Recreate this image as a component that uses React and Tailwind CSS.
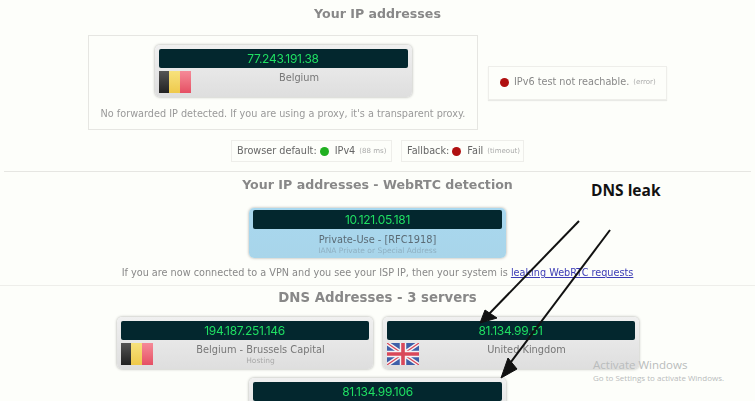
const dejavu = "font-['DejaVu_Sans',sans-serif]";

function BelgiumFlag() {
  return (
    <div className="flex h-[22px] w-[32px] shrink-0">
      <div className="flex-1 bg-gradient-to-b from-[#555] to-[#222]" />
      <div className="flex-1 bg-gradient-to-b from-[#f7e27c] to-[#efc94a]" />
      <div className="flex-1 bg-gradient-to-b from-[#f58a98] to-[#e54f64]" />
    </div>
  );
}

function UkFlag() {
  return (
    <svg width="32" height="22" viewBox="0 0 32 22" className="shrink-0">
      <rect width="32" height="22" fill="#3f5fa8" />
      <path d="M0 0 L32 22 M32 0 L0 22" stroke="#f4f4f6" strokeWidth="4" />
      <path d="M0 0 L32 22 M32 0 L0 22" stroke="#d9485a" strokeWidth="1.2" />
      <path d="M16 0 V22 M0 11 H32" stroke="#f4f4f6" strokeWidth="6.5" />
      <path d="M16 0 V22 M0 11 H32" stroke="#d9485a" strokeWidth="3.6" />
    </svg>
  );
}

function IpBar({ ip }) {
  return (
    <div className="flex h-[19px] items-center justify-center rounded-[2px] bg-[#03272e] font-['Inter',sans-serif] text-[12px] font-normal tracking-[-0.3px] text-[#1fdf62]">
      {ip}
    </div>
  );
}

function IpCard({ ip, flag, name, sub, blue, className = '' }) {
  return (
    <div
      className={`rounded-[5px] px-[4px] pb-[4px] shadow-[0_0_3px_rgba(0,0,0,0.35)] ${
        blue ? 'bg-gradient-to-b from-[#a9d8ef] to-[#a8d5ea] pt-[2px]' : 'bg-gradient-to-b from-[#f0f0f0] to-[#dedede] pt-[4px]'
      } ${className}`}
    >
      <IpBar ip={ip} />
      <div className="flex h-[25px] items-start pt-[3px]">
        {flag}
        <div className="flex-1 text-center leading-[11px]">
          <div className={`text-[9.8px] ${blue ? 'pt-[2px] text-[#5b6b75]' : 'pt-[1px] text-[#777]'}`}>{name}</div>
          {sub && <div className={`text-[7.5px] ${blue ? 'text-[#8fb0c2]' : 'text-[#aaa]'}`}>{sub}</div>}
        </div>
      </div>
    </div>
  );
}

function Dot({ color }) {
  return <span className={`inline-block h-[9px] w-[9px] rounded-full ${color}`} />;
}

function Pill({ label, dot, value, note, className = '' }) {
  return (
    <div className={`flex h-[22px] items-center border border-[#eeeeea] pl-[5px] text-[9.7px] text-[#666] ${className}`}>
      <span>{label}</span>
      <span className="mr-[6px] ml-[3px] flex items-center">
        <Dot color={dot} />
      </span>
      <span className="mr-[4px]">{value}</span>
      <span className="text-[7px] text-[#aaa]">{note}</span>
    </div>
  );
}

function Title({ children, className = '' }) {
  return <h2 className={`text-center leading-[16px] font-bold text-[#888] ${className}`}>{children}</h2>;
}

export default function App() {
  return (
    <div className={`relative h-[401px] w-[755px] overflow-hidden bg-[#fdfefa] ${dejavu}`}>
      <div className="blur-[0.5px]">
        <Title className="pt-[6px] text-[12.6px]">Your IP addresses</Title>

        <div className="mt-[13px] ml-[88px] flex items-center gap-[10px]">
          <div className="flex h-[95px] w-[390px] flex-col items-center border border-[#e6e6e2] pt-[9px]">
            <IpCard className="w-[257px]" ip="77.243.191.38" flag={<BelgiumFlag />} name="Belgium" />
            <p className="mt-[11px] text-[9.7px] leading-[12px] whitespace-nowrap text-[#999]">
              No forwarded IP detected. If you are using a proxy, it's a transparent proxy.
            </p>
          </div>
          <div className="flex h-[34px] w-[179px] items-center border border-[#eeeeea] pl-[11px] text-[9.7px] text-[#888] shadow-[0_1px_1px_rgba(0,0,0,0.08)]">
            <Dot color="bg-[#b01010]" />
            <span className="mr-[4px] ml-[5px]">IPv6 test not reachable.</span>
            <span className="text-[7px] text-[#aaa]">(error)</span>
          </div>
        </div>

        <div className="mt-[10px] ml-[231px] flex gap-[9px]">
          <Pill className="w-[161px]" label="Browser default:" dot="bg-[#20b020]" value="IPv4" note="(88 ms)" />
          <Pill className="w-[123px]" label="Fallback:" dot="bg-[#b01010]" value="Fail" note="(timeout)" />
        </div>

        <div className="mx-[4px] mt-[9px] h-px bg-[#e6e6e2]" />
        <Title className="pt-[5px] text-[12.6px]">Your IP addresses - WebRTC detection</Title>

        <div className="mt-[15px] flex justify-center">
          <IpCard
            blue
            className="w-[257px]"
            ip="10.121.05.181"
            name="Private-Use - [RFC1918]"
            sub="IANA Private or Special Address"
          />
        </div>

        <p className="mt-[9px] text-center text-[9.7px] leading-[12px] text-[#888]">
          If you are now connected to a VPN and you see your ISP IP, then your system is{' '}
          <a className="text-[#3b3bb5] underline">leaking WebRTC requests</a>
        </p>

        <div className="mt-[6px] h-px bg-[#eeeeea]" />
        <Title className="pt-[4px] text-[13.3px]">DNS Addresses - 3 servers</Title>

        <div className="mt-[11px] flex justify-center gap-[10px]">
          <IpCard className="w-[256px]" ip="194.187.251.146" flag={<BelgiumFlag />} name="Belgium - Brussels Capital" sub="Hosting" />
          <IpCard className="w-[256px]" ip="81.134.99.51" flag={<UkFlag />} name="United Kingdom" />
        </div>
        <div className="mt-[9px] flex justify-center">
          <IpCard className="w-[257px]" ip="81.134.99.106" />
        </div>
      </div>

      {/* annotation drawn over the screenshot */}
      <span className="absolute top-[181px] left-[591px] font-['Open_Sans',sans-serif] text-[15.5px] leading-[18px] font-bold text-[#111]">
        DNS leak
      </span>
      <svg width="755" height="401" className="pointer-events-none absolute top-0 left-0">
        <path d="M579 221 L488 315" stroke="#111" strokeWidth="2" />
        <path d="M480 323 L485 310 L497 318 Z" fill="#111" stroke="#111" />
        <path d="M610 230 L508 366" stroke="#111" strokeWidth="2" />
        <path d="M501 378 L508 358 L517 369 Z" fill="#111" stroke="#111" />
      </svg>

      <div className="absolute top-[357px] left-[593px] font-['Open_Sans',sans-serif] whitespace-nowrap text-[#b9bcbc]">
        <div className="text-[11.5px] leading-[15px]">Activate Windows</div>
        <div className="text-[8px] leading-[11px]">Go to Settings to activate Windows.</div>
      </div>
    </div>
  );
}
